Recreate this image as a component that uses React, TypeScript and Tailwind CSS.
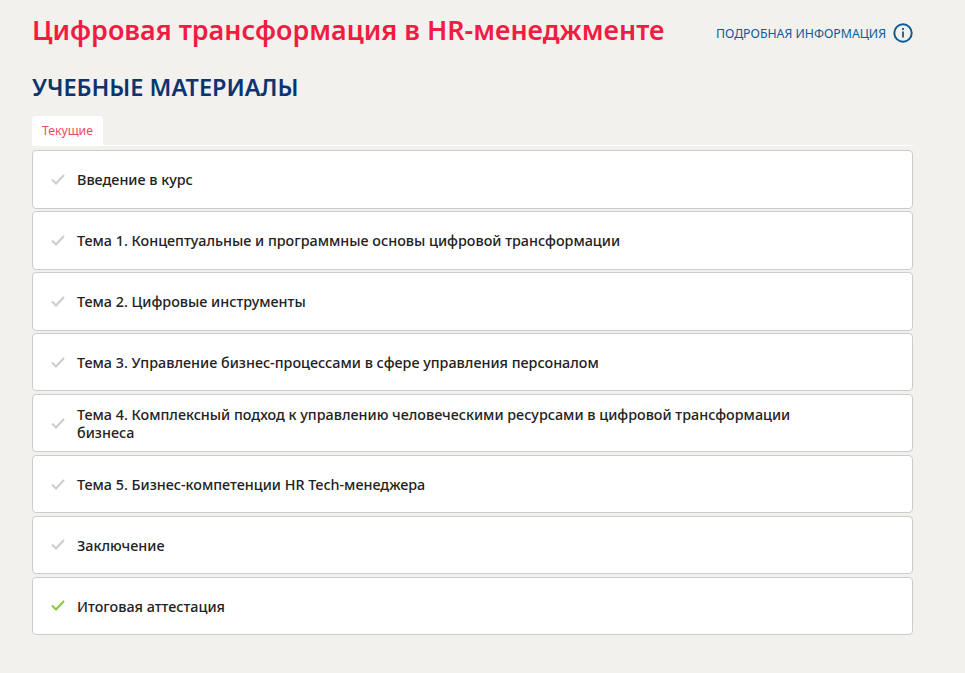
const font = "[font-family:'Noto_Sans','Open_Sans',sans-serif]";

const items = [
  { title: "Введение в курс" },
  { title: "Тема 1. Концептуальные и программные основы цифровой трансформации" },
  { title: "Тема 2. Цифровые инструменты" },
  { title: "Тема 3. Управление бизнес-процессами в сфере управления персоналом" },
  { title: "Тема 4. Комплексный подход к управлению человеческими ресурсами в цифровой трансформации бизнеса" },
  { title: "Тема 5. Бизнес-компетенции HR Tech-менеджера" },
  { title: "Заключение" },
  { title: "Итоговая аттестация", done: true },
];

function Check({ done }: { done?: boolean }) {
  return (
    <svg width="14" height="11" viewBox="0 0 14 11" fill="none" className="shrink-0">
      <path
        d="M1 5.5 L5 9.5 L13 1"
        stroke={done ? "#8cc63f" : "#cccccc"}
        strokeWidth="2"
      />
    </svg>
  );
}

export default function App() {
  return (
    <div className={`min-h-[673px] bg-[#f3f1ee] pl-8 pr-[52px] pt-[13px] ${font}`}>
      <div className="flex items-start justify-between">
        <h1 className="text-[26.9px] leading-[34px] font-semibold text-[#f01c41]">
          Цифровая трансформация в HR-менеджменте
        </h1>
        <a className="mt-[10px] flex items-center gap-[7px] text-[12.3px] leading-5 text-[#0f5a96]">
          <span className="relative top-px">ПОДРОБНАЯ ИНФОРМАЦИЯ</span>
          <svg width="20" height="20" viewBox="0 0 20 20" fill="none">
            <circle cx="10" cy="10" r="8.7" stroke="#0f5a96" strokeWidth="2" />
            <rect x="9.1" y="8.5" width="1.8" height="6" fill="#0f5a96" />
            <rect x="9.1" y="5" width="1.8" height="2" fill="#0f5a96" />
          </svg>
        </a>
      </div>

      <h2 className="mt-[24px] text-[23.5px] leading-[32px] font-semibold text-[#0b3470]">
        УЧЕБНЫЕ МАТЕРИАЛЫ
      </h2>

      <div className="mt-[13px] border-b border-white">
        <span className="inline-block rounded-t-[4px] bg-white px-[10px] py-[6px] text-[12.2px] leading-[17px] text-[#ee4a64]">
          Текущие
        </span>
      </div>

      <ul className="mt-[4.3px] flex flex-col gap-[2.47px]">
        {items.map((item) => (
          <li
            key={item.title}
            className="flex h-[58.45px] items-center gap-3 rounded-[4px] border border-[#cccccc] bg-white pl-[18px] pr-[100px]"
          >
            <Check done={item.done} />
            <span className="pt-[1.7px] text-[14.35px] leading-[18px] font-medium text-[#222222]">
              {item.title}
            </span>
          </li>
        ))}
      </ul>
    </div>
  );
}
